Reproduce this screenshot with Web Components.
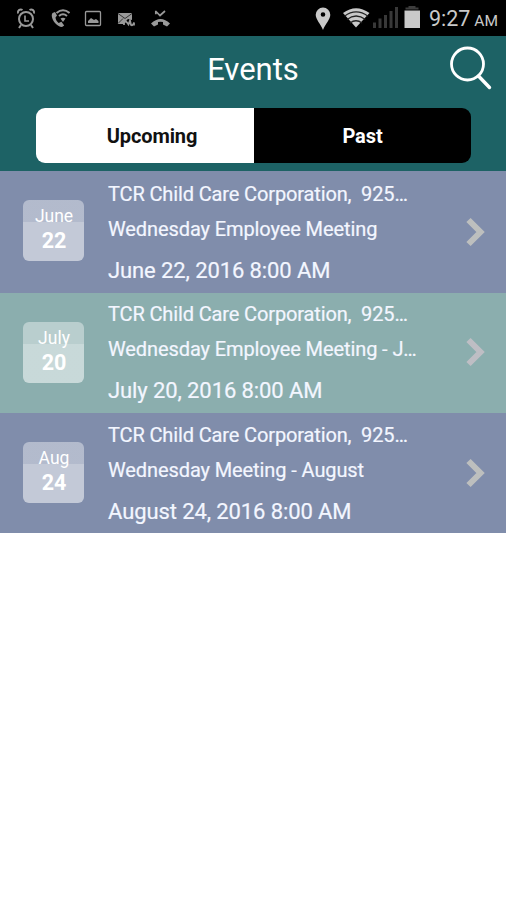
<!DOCTYPE html>
<html lang="en">
<head>
<meta charset="utf-8">
<title>Events</title>
<style>
    body{
        margin: 0;
        background: #fff;
        font-family: Roboto, sans-serif;
    }
</style>
</head>
<body>

<status-bar time="9:27" period="AM"></status-bar>
<events-header>
    Events
    <segment-tabs slot="tabs">
        <span slot="left">Upcoming</span>
        <span slot="right">Past</span>
    </segment-tabs>
</events-header>
<event-list>
    <event-row month="June" day="22" class="first">
        <span slot="place">TCR Child Care Corporation,&nbsp; 925…</span>
        <span slot="name">Wednesday Employee Meeting</span>
        <span slot="date">June 22, 2016 8:00 AM</span>
    </event-row>
    <event-row month="July" day="20" class="alt">
        <span slot="place">TCR Child Care Corporation,&nbsp; 925…</span>
        <span slot="name">Wednesday Employee Meeting - J…</span>
        <span slot="date">July 20, 2016 8:00 AM</span>
    </event-row>
    <event-row month="Aug" day="24">
        <span slot="place">TCR Child Care Corporation,&nbsp; 925…</span>
        <span slot="name">Wednesday Meeting - August</span>
        <span slot="date">August 24, 2016 8:00 AM</span>
    </event-row>
</event-list>

<script>
function attach(el, html){
    const template = document.createElement('template');
    template.innerHTML = html;
    el.attachShadow({ mode: 'open' });
    el.shadowRoot.appendChild(template.content.cloneNode(true));
}

class StatusBar extends HTMLElement{
    constructor(){
        super();
        attach(this, `
<style>
    :host{
        display: flex;
        justify-content: space-between;
        height: 36px;
        box-sizing: border-box;
        padding: 0 8px 0 16px;
        background: #000;
        color: #c9c9c9;
    }
    .icons, .system{
        display: flex;
        align-items: center;
    }
    .icons{
        gap: 14px;
        color: #999;
    }
    svg{
        display: block;
    }
    .time{
        margin-left: 8px;
        font-size: 21.5px;
        line-height: 36px;
        white-space: nowrap;
        padding-top: 3px;
    }
    .time small{
        font-size: 15.5px;
        margin-left: 4px;
    }
</style>
<div class="icons">
    <svg width="20" height="36" viewBox="0 0 20 36" fill="none" stroke="currentColor" stroke-width="2">
        <circle cx="10" cy="19" r="7"/>
        <path d="M2 13.5a3 3 0 0 1 4.500-3.500M18 13.500a3 3 0 0 0-4.500-3.500M5 25l-2 3M15 25l2 3"/>
        <path d="M9 15.500v5.500h4" stroke-width="1.600"/>
    </svg>
    <svg width="20" height="36" viewBox="0 0 20 36" fill="none" stroke="currentColor">
        <path d="M2.500 13C-.500 17 6 27 12 27l2.200-1.500-2.800-3.700-2.700 1.200c-2-1.500-3-3.500-3.200-5.500l1.500-2-2-3.500z" fill="currentColor" stroke="none"/>
        <path d="M6.500 13Q13 7.500 19.500 13M9 16q4-3.500 8 0" stroke-width="2"/>
        <path d="M10.500 18.500q2.500-1.500 5 0L13 22z" fill="currentColor" stroke="none"/>
    </svg>
    <svg width="18" height="36" viewBox="0 0 18 36" fill="none" stroke="currentColor">
        <rect x="1.500" y="11.500" width="15" height="14" rx="1" stroke-width="1.300"/>
        <path d="M4 23v-2l3-3 3 2 2-1 2.500 2v2z" fill="currentColor" stroke="none"/>
    </svg>
    <svg width="20" height="36" viewBox="0 0 20 36" fill="none" stroke="currentColor">
        <path d="M2 13h14v7l-4-1-3 3-1 2H2z" fill="currentColor" stroke="none"/>
        <path d="M2 13.500l7 5 7-5M2 23.500l5-5" stroke="#333" stroke-width="1"/>
        <path d="M8 25v-2.500q1.500-2 3 0l1.500 2 1.500-4 1 4.500q2 1 3-2.500v3" stroke-width="1.800"/>
    </svg>
    <svg width="20" height="36" viewBox="0 0 20 36" fill="none" stroke="currentColor">
        <path d="M6 11.500l4 4 5-4.500M5.800 10.800v3.500" stroke-width="1.700"/>
        <path d="M1 23.500q9.500-9 19 0l-3 3-4-2v-2.500q-2.500-.700-5 0v2.500l-4 2z" fill="currentColor" stroke="none"/>
    </svg>
</div>
<div class="system">
    <svg width="106" height="36" viewBox="0 0 106 36" fill="currentColor">
        <path fill-rule="evenodd" d="M8 7.500a7.300 7.300 0 0 0-7.300 7.300c0 5 5 9 7.300 15.200 2.300-6.200 7.300-10.200 7.300-15.200a7.300 7.300 0 0 0-7.300-7.300zm0 4.700a2.300 2.300 0 1 1 0 4.600 2.300 2.300 0 0 1 0-4.600z"/>
        <path d="M28 13Q41 3.500 54.500 13L41 27.500z"/>
        <path d="M29.500 16.200q11.500-8.500 23.500 0M32 19.500q9-7 18.500 0M35 23q6-4.500 12 0" fill="none" stroke="#222" stroke-width="1.300"/>
        <path d="M58 22.500h3v5.500h-3zM63.500 18.500h3V28h-3zM69 15h3v13h-3zM74.500 11h3v17h-3zM80 7h3v21h-3z" fill="#383838"/>
        <path d="M89.500 10.500h15.500V28H89.500z"/>
        <path d="M93.500 6h7v1.500h3v2h-13v-2h3z" fill="#3d3d3d"/>
    </svg>
    <div class="time"><span></span><small></small></div>
</div>`);
        this.shadowRoot.querySelector('.time span').textContent = this.getAttribute('time');
        this.shadowRoot.querySelector('.time small').textContent = this.getAttribute('period');
    }
}

class EventsHeader extends HTMLElement{
    constructor(){
        super();
        attach(this, `
<style>
    :host{
        display: block;
        height: 135px;
        box-sizing: border-box;
        background: #1d6265;
        color: #fff;
    }
    .bar{
        display: grid;
        grid-template-columns: 60px 1fr 60px;
        height: 72px;
    }
    h1{
        margin: 0;
        font-size: 31px;
        font-weight: 400;
        line-height: 67px;
        text-align: center;
    }
    svg{
        display: block;
    }
</style>
<div class="bar">
    <span></span>
    <h1><slot></slot></h1>
    <svg width="60" height="72" viewBox="0 0 60 72" fill="none" stroke="#fff" stroke-linecap="round">
        <circle cx="21.500" cy="28" r="16" stroke-width="2.800"/>
        <path d="M32.500 40L43.500 51.500" stroke-width="3.400"/>
    </svg>
</div>
<slot name="tabs"></slot>`);
    }
}

class SegmentTabs extends HTMLElement{
    constructor(){
        super();
        attach(this, `
<style>
    :host{
        display: grid;
        grid-template-columns: 218px 217px;
        height: 55px;
        margin: 0 35px 0 36px;
        border-radius: 9px;
        overflow: hidden;
        font-size: 20px;
        font-weight: 700;
        line-height: 56px;
        letter-spacing: -.1px;
        text-align: center;
    }
    .on{
        padding-left: 14px;
        background: #fff;
        color: #111;
    }
    .off{
        background: #000;
        color: #fff;
    }
</style>
<div class="on"><slot name="left"></slot></div>
<div class="off"><slot name="right"></slot></div>`);
    }
}

class EventList extends HTMLElement{
    constructor(){
        super();
        attach(this, `
<style>
    :host{
        display: grid;
        grid-template-rows: 121.500px 120.500px 120px;
    }
</style>
<slot></slot>`);
    }
}

class EventRow extends HTMLElement{
    constructor(){
        super();
        attach(this, `
<style>
    :host{
        display: grid;
        grid-template-columns: 85px 1fr 60px;
        column-gap: 23px;
        background: #808dab;
        color: #f3f6ff;
        --arrow: #bdbfbe;
        --top: 10px;
    }
    :host(.first){
        --top: 11px;
    }
    :host(.alt){
        background: #8baeae;
        --arrow: #bebec4;
        --top: 9px;
    }
    .badge{
        width: 61px;
        height: 61px;
        margin: 29px 0 0 23px;
        border-radius: 6px;
        overflow: hidden;
        text-align: center;
        color: #fff;
        background: linear-gradient(rgba(255,255,255,.4) 22px, rgba(255,255,255,.53) 22px);
    }
    .month{
        font-size: 17.5px;
        line-height: 21px;
        padding: 6px 0 0 1px;
    }
    .day{
        font-size: 21.5px;
        font-weight: 700;
        line-height: 28px;
        padding-left: 1px;
    }
    .text{
        white-space: nowrap;
        -webkit-text-stroke: .2px;
    }
    .text div{
        font-size: 20px;
        line-height: 24px;
    }
    .text .place{
        padding-top: var(--top);
        letter-spacing: -.13px;
    }
    .text .name{
        padding-top: 11px;
        letter-spacing: -.1px;
    }
    .text .date{
        font-size: 22px;
        padding-top: 18px;
        letter-spacing: -.1px;
    }
    svg{
        display: block;
        margin-top: calc(var(--top) + 35px);
    }
</style>
<div class="badge">
    <div class="month"></div>
    <div class="day"></div>
</div>
<div class="text">
    <div class="place"><slot name="place"></slot></div>
    <div class="name"><slot name="name"></slot></div>
    <div class="date"><slot name="date"></slot></div>
</div>
<svg width="60" height="30" viewBox="0 0 60 30" fill="none">
    <path d="M22.500 3L34.500 15 22.500 27" stroke="var(--arrow)" stroke-width="6"/>
</svg>`);
        this.shadowRoot.querySelector('.month').textContent = this.getAttribute('month');
        this.shadowRoot.querySelector('.day').textContent = this.getAttribute('day');
    }
}

window.customElements.define('status-bar', StatusBar);
window.customElements.define('events-header', EventsHeader);
window.customElements.define('segment-tabs', SegmentTabs);
window.customElements.define('event-list', EventList);
window.customElements.define('event-row', EventRow);
</script>
</body>
</html>
